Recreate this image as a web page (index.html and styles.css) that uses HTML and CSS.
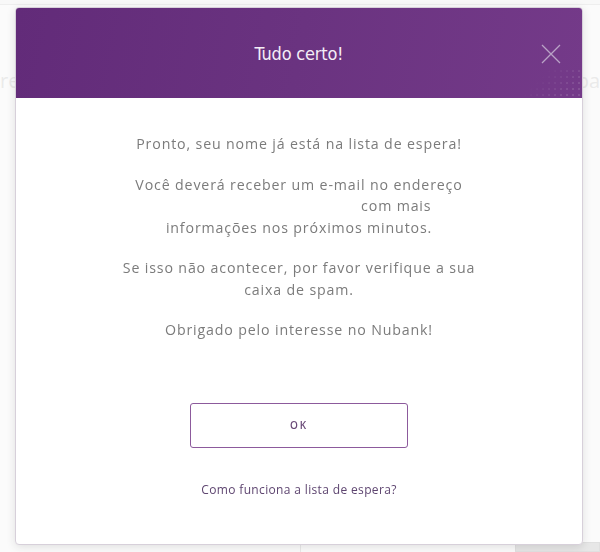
FILE: index.html
```html
<!DOCTYPE html>
<html lang="pt-BR">
<head>
<meta charset="utf-8">
<title>Tudo certo!</title>
<link rel="stylesheet" href="styles.css">
</head>
<body>
<div class="page">
  <div class="topbar"></div>
  <div class="hero">
    <span class="peek left">re</span>
    <span class="peek right">ba</span>
  </div>
  <div class="bottom-strip">
    <div class="card-a"></div>
    <div class="card-b"></div>
  </div>
</div>

<div class="overlay">
  <div class="modal">
    <header class="modal-header">
      <h1 class="modal-title">Tudo certo!</h1>
      <button class="close" aria-label="Fechar">
        <svg width="20" height="20" viewBox="0 0 20 20">
          <path d="M1 1 L19 19 M19 1 L1 19" stroke="#b9a2c6" stroke-width="1.3" fill="none"/>
        </svg>
      </button>
      <div class="dots"></div>
    </header>
    <div class="modal-body">
      <p>Pronto, seu nome já está na lista de espera!</p>
      <p>Você deverá receber um e-mail no endereço<br><span class="email-gap"></span> com mais<br>informações nos próximos minutos.</p>
      <p>Se isso não acontecer, por favor verifique a sua<br>caixa de spam.</p>
      <p>Obrigado pelo interesse no Nubank!</p>
      <button class="ok">OK</button>
      <a class="link" href="#">Como funciona a lista de espera?</a>
    </div>
  </div>
</div>
</body>
</html>
```

FILE: styles.css
```css
* { box-sizing: border-box; }

html, body {
  margin: 0;
  padding: 0;
  width: 600px;
  height: 552px;
  overflow: hidden;
  background: #fafafa;
  font-family: "Open Sans", "Liberation Sans", sans-serif;
}

.page {
  width: 600px;
  height: 552px;
  display: flex;
  flex-direction: column;
  background: #f7f7f7;
}

.topbar {
  height: 5px;
  border-bottom: 1px solid #d9d9d9;
  background: #f0f0f0;
}

.hero {
  display: flex;
  justify-content: space-between;
  margin-top: 64px;
  height: 30px;
  font-family: "Open Sans", sans-serif;
  font-size: 20px;
  color: #d0d0d0;
  line-height: 24px;
}

.bottom-strip {
  margin-top: auto;
  height: 10px;
  display: flex;
  gap: 150px;
  padding-left: 300px;
}

.card-a {
  width: 80px;
  border-left: 1px solid #cfcfcf;
}

.card-b {
  width: 105px;
  background: #c9c9c9;
  border: 1px solid #bbb;
}

.overlay {
  position: fixed;
  inset: 0;
  background: rgba(255, 255, 255, 0.55);
}

.modal {
  position: absolute;
  top: 7px;
  left: 15px;
  width: 568px;
  height: 538px;
  background: #fff;
  border: 1px solid #d7d0da;
  border-radius: 4px;
  box-shadow: 0 2px 10px rgba(0, 0, 0, 0.12);
  overflow: hidden;
  display: flex;
  flex-direction: column;
}

.modal-header {
  position: relative;
  height: 90px;
  flex: none;
  background: linear-gradient(100deg, #622b79 0%, #6a3380 50%, #743a89 100%);
  display: flex;
  align-items: center;
  justify-content: center;
}

.modal-title {
  margin: 0;
  font-family: "DejaVu Sans Condensed", "Liberation Sans Narrow", sans-serif;
  font-weight: normal;
  font-size: 18px;
  color: #f4eef7;
  letter-spacing: -0.2px;
}

.close {
  position: absolute;
  right: 21px;
  top: 36px;
  width: 20px;
  height: 20px;
  padding: 0;
  border: 0;
  background: none;
  display: flex;
}

.dots {
  position: absolute;
  right: 0;
  bottom: 0;
  width: 60px;
  height: 30px;
  background-image: radial-gradient(circle, rgba(255,255,255,0.12) 0.7px, transparent 1px);
  background-size: 6px 6px;
  -webkit-mask-image: linear-gradient(135deg, transparent 30%, #000 80%);
  mask-image: linear-gradient(135deg, transparent 30%, #000 80%);
}

.modal-body {
  display: flex;
  flex-direction: column;
  align-items: center;
  padding-top: 35px;
  text-align: center;
}

.modal-body p {
  margin: 0 0 19px;
  font-size: 14.2px;
  line-height: 21.5px;
  color: #7b7b7b;
  letter-spacing: 0.85px;
  white-space: nowrap;
}

.modal-body p:last-of-type { margin-bottom: 0; }

.email-gap {
  display: inline-block;
  width: 190px;
}

.ok {
  margin-top: 62px;
  width: 218px;
  height: 45px;
  background: #fff;
  border: 1px solid #8c5a9c;
  border-radius: 3px;
  font-family: "Open Sans", sans-serif;
  font-weight: 600;
  font-size: 10px;
  letter-spacing: 1.8px;
  color: #6a4a78;
}

.link {
  margin-top: 34px;
  font-size: 12px;
  line-height: 15px;
  color: #5e4570;
  text-decoration: none;
  letter-spacing: 0.35px;
}
```
